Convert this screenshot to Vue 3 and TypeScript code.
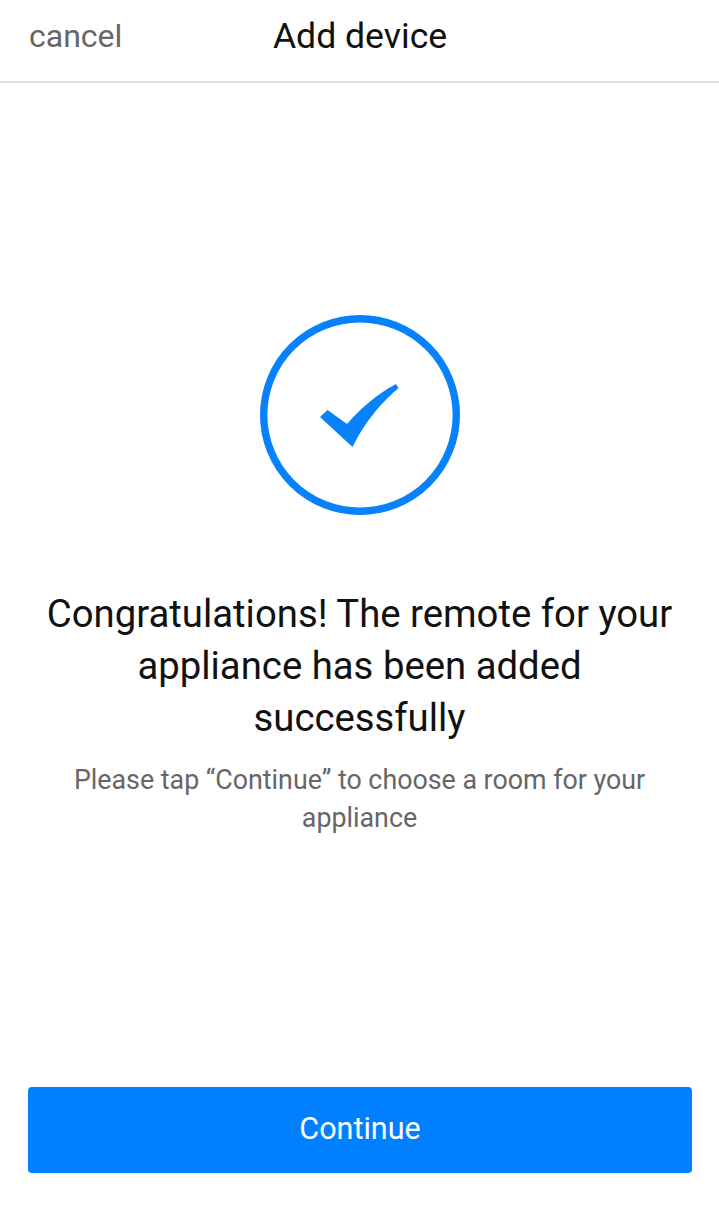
<script setup lang="ts">
const title: string = 'Add device'
</script>

<template>
  <div class="page">
    <header class="bar">
      <span class="cancel">cancel</span>
      <span class="title">{{ title }}</span>
    </header>
    <main class="body">
      <svg class="icon" width="200" height="200" viewBox="0 0 200 200" aria-hidden="true">
        <circle cx="100" cy="100" r="96.3" fill="none" stroke="#0782fb" stroke-width="7.4" />
        <path d="M60 102 L67.5 95 L87 109 C99 95 117 79 136 69 L138.5 73 C124 85 105 106 92.5 132 Z" fill="#0782fb" />
      </svg>
      <h1 class="heading">Congratulations! The remote for your appliance has been added successfully</h1>
      <p class="hint">Please tap “Continue” to choose a room for your appliance</p>
    </main>
    <footer class="foot">
      <button class="btn" type="button">Continue</button>
    </footer>
  </div>
</template>

<style>
html, body { margin: 0; background: #fff; }
</style>

<style scoped>
.page {
  width: 719px;
  height: 1219px;
  display: flex;
  flex-direction: column;
  background: #fff;
  font-family: Roboto, "Liberation Sans", sans-serif;
}
.bar {
  border-bottom: 2px solid #e1e1e1;
  display: grid;
  grid-template-columns: 1fr auto 1fr;
  align-items: center;
  padding: 0 28px 9px 29px;
  height: 72px;
}
.cancel { font-size: 32px; color: #666; }
.title { font-size: 35.6px; color: #111; }
.body {
  flex: 1;
  display: flex;
  flex-direction: column;
  align-items: center;
  padding: 232px 40px 0;
}
.icon { display: block; }
.heading {
  margin: 73px 0 0;
  font-size: 38.3px;
  font-weight: 400;
  line-height: 52px;
  color: #111;
  text-align: center;
}
.hint {
  margin: 17px 0 0;
  font-size: 26.8px;
  line-height: 38px;
  color: #666;
  text-align: center;
}
.foot { padding: 0 27px 46px 28px; }
.btn {
  display: block;
  width: 100%;
  height: 86px;
  padding: 0 0 3px;
  border: 0;
  border-radius: 4px;
  background: #007fff;
  color: #fff;
  font: 400 30.5px Roboto, "Liberation Sans", sans-serif;
}
</style>
